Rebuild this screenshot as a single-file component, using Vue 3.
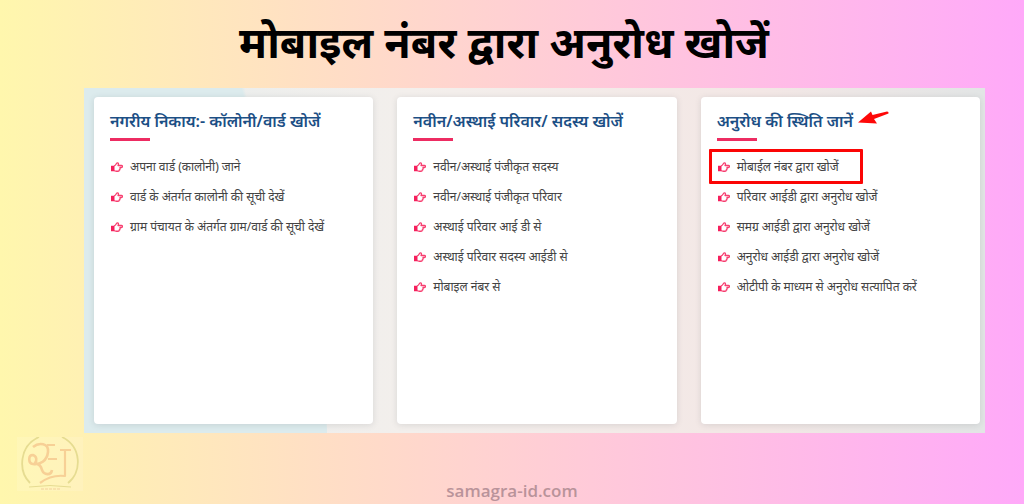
<script setup>
const groups = [
  {
    title: 'नगरीय निकाय:- कॉलोनी/वार्ड खोजें',
    items: ['अपना वार्ड (कालोनी) जाने', 'वार्ड के अंतर्गत कालोनी की सूची देखें', 'ग्राम पंचायत के अंतर्गत ग्राम/वार्ड की सूची देखें'],
  },
  {
    title: 'नवीन/अस्थाई परिवार/ सदस्य खोजें',
    items: ['नवीन/अस्थाई पंजीकृत सदस्य', 'नवीन/अस्थाई पंजीकृत परिवार', 'अस्थाई परिवार आई डी से', 'अस्थाई परिवार सदस्य आईडी से', 'मोबाइल नंबर से'],
  },
  {
    title: 'अनुरोध की स्थिति जानें',
    arrow: true,
    marked: 0,
    items: ['मोबाईल नंबर द्वारा खोजें', 'परिवार आईडी द्वारा अनुरोध खोजें', 'समग्र आईडी द्वारा अनुरोध खोजें', 'अनुरोध आईडी द्वारा अनुरोध खोजें', 'ओटीपी के माध्यम से अनुरोध सत्यापित करें'],
  },
]
</script>

<template>
  <div class="page">
    <h1>मोबाइल नंबर द्वारा अनुरोध खोजें</h1>
    <main class="panel">
      <section v-for="group in groups" :key="group.title" class="card">
        <h2>
          {{ group.title }}
          <svg v-if="group.arrow" class="arrow" viewBox="0 0 32 14" aria-hidden="true">
            <path d="M0 11.500 13 0.500 14.500 4 29 0.500Q31 0.500 30.500 2.500L16 8 19 12.500Z" fill="#fe0808" />
          </svg>
        </h2>
        <ul>
          <li v-for="(item, i) in group.items" :key="item">
            <a href="#" :class="{ marked: group.marked === i }">
              <svg class="hand" viewBox="0 0 24 20" aria-hidden="true">
                <path d="M0 7.500H7V18.500H0Z" fill="#f51f5c" />
                <path
                  d="M6 8C9 7 10 5 11 3C12 1 15 1 15 4Q15 5.500 14 7H21Q23 7 23 9Q23 11 21 11H18Q19.500 12.500 17.500 14Q18.500 15.500 16.500 16Q16.500 18.500 14 18.500H11Q8 18 6 17"
                  fill="none" stroke="#f73f70" stroke-width="2.600" stroke-linejoin="round"
                />
              </svg>
              <span>{{ item }}</span>
            </a>
          </li>
        </ul>
      </section>
    </main>
    <footer>
      <svg class="seal" viewBox="0 0 66 54" aria-hidden="true">
        <rect width="66" height="54" fill="#fff" opacity="0.12" />
        <g fill="none" stroke="#e6dc91">
          <path d="M22 0C2 9 1 34 13 46" stroke-width="1.800" />
          <path d="M45 0C65 10 65 35 51 46" stroke-width="1.800" />
          <path d="M12 50Q33 47 54 50" />
        </g>
        <g fill="none" stroke="#f7d096" stroke-linejoin="round">
          <path d="M16 10C22 5 32 6 31 15C30 24 23 28 16 27C11 26 11 18 16 18C20 19 20 24 18 26C23 28 24 29 25 33C27 38 34 39 35 33" stroke-width="2.600" />
          <path d="M30 8H38M31 22H40M43 13H54M48 14V39C39 38 31 40 23 46" stroke-width="2.200" />
        </g>
        <path d="M24 52H43" stroke="#f2cf9d" stroke-dasharray="3 1" />
      </svg>
      <a class="site" href="#">samagra-id.com</a>
    </footer>
  </div>
</template>

<style>
body {
  margin: 0;
}
</style>

<style scoped>
.page {
  display: flex;
  flex-direction: column;
  min-height: 100vh;
  font-family: "Noto Sans", "Noto Sans Devanagari", sans-serif;
  background: linear-gradient(90deg, #fff7ad, #ffa9f9);
}

h1 {
  margin: 0;
  padding: 0 16px 4px 0;
  font-size: 43px;
  line-height: 84px;
  text-align: center;
  color: #000;
}

.panel {
  display: grid;
  grid-template-columns: repeat(3, 1fr);
  gap: 24px;
  margin: 0 39px 0 84px;
  padding: 9px 5px 9px 10px;
  background:
    linear-gradient(76deg, #dcebed 0 74%, transparent 75%) 0 0 / 243px 100% no-repeat,
    linear-gradient(90deg, #e6eded 0, #f3efec 36%, #f3e7e5 75%, #e2e5e5 100%);
}

.card {
  min-height: 295px;
  padding: 8px 16px 24px;
  border-radius: 4px;
  background: #fff;
  box-shadow: 0 1px 6px rgba(80, 90, 95, 0.16);
}

h2 {
  display: flex;
  align-items: center;
  gap: 5px;
  margin: 0;
  font-size: 16px;
  font-weight: 600;
  line-height: 32px;
  white-space: nowrap;
  color: #1c4f85;
}

.arrow {
  width: 32px;
  height: 14px;
  margin-bottom: 6px;
}

ul {
  margin: 0;
  padding: 0;
  list-style: none;
}

ul::before {
  content: "";
  display: block;
  width: 40px;
  height: 3px;
  margin: 1px 0 11px;
  background: #ed2c62;
}

a {
  text-decoration: none;
}

li a {
  position: relative;
  display: flex;
  align-items: center;
  gap: 7px;
  width: max-content;
  font-size: 12px;
  line-height: 30px;
  white-space: nowrap;
  color: #444;
}

.marked::after {
  content: "";
  position: absolute;
  inset: -3px -24px -2px -8px;
  border: 3px solid #fb0505;
  border-radius: 1px;
}

.hand {
  width: 12px;
  height: 10px;
  margin-left: 1px;
}

footer {
  display: grid;
  grid-template-columns: 1fr auto 1fr;
  padding: 4px 17px 0;
}

.seal {
  width: 66px;
  height: 54px;
}

.site {
  align-self: end;
  margin-bottom: -12px;
  font-family: "Open Sans", "Noto Sans", sans-serif;
  font-size: 17px;
  font-weight: 600;
  line-height: 24px;
  color: #b9939a;
}
</style>
